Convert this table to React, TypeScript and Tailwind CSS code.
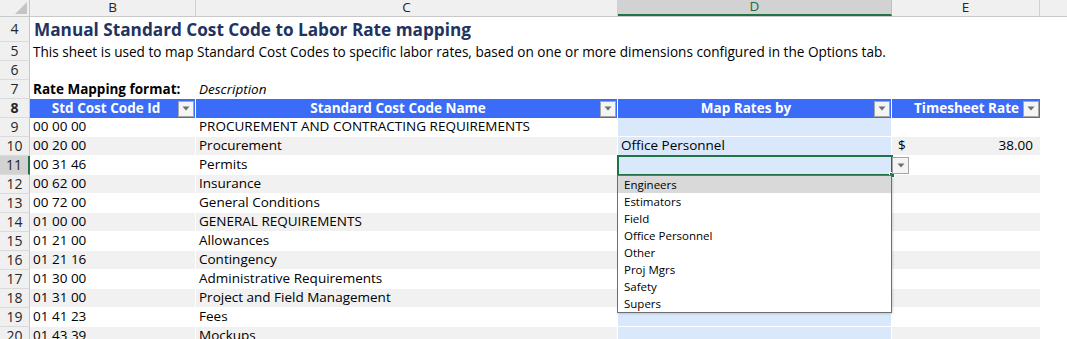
import React from "react";

type Row = {
    n: number;
    id?: string;
    name?: string;
    map?: string;
    rate?: string;
};

const rows: Row[] = [
    { n: 9, id: "00 00 00", name: "PROCUREMENT AND CONTRACTING REQUIREMENTS" },
    { n: 10, id: "00 20 00", name: "Procurement", map: "Office Personnel", rate: "38.00" },
    { n: 11, id: "00 31 46", name: "Permits" },
    { n: 12, id: "00 62 00", name: "Insurance" },
    { n: 13, id: "00 72 00", name: "General Conditions" },
    { n: 14, id: "01 00 00", name: "GENERAL REQUIREMENTS" },
    { n: 15, id: "01 21 00", name: "Allowances" },
    { n: 16, id: "01 21 16", name: "Contingency" },
    { n: 17, id: "01 30 00", name: "Administrative Requirements" },
    { n: 18, id: "01 31 00", name: "Project and Field Management" },
    { n: 19, id: "01 41 23", name: "Fees" },
    { n: 20, id: "01 43 39", name: "Mockups" },
];

const options = ["Engineers", "Estimators", "Field", "Office Personnel", "Other", "Proj Mgrs", "Safety", "Supers"];

function Arrow() {
    return (
        <svg width="8" height="5" viewBox="0 0 8 5">
            <path d="M0.5 0.5 L7.5 0.5 L4 4.5 Z" fill="#6e6e6e" />
        </svg>
    );
}

function FilterButton() {
    return (
        <div className="w-[16px] h-[16px] shrink-0 bg-[#f4f4f4] border border-[#a6a6a6] flex items-center justify-center">
            <Arrow />
        </div>
    );
}

function RowHeader({ n, h, selected }: { n: number; h: string; selected?: boolean }) {
    return (
        <div
            className={`w-[30px] shrink-0 ${h} flex items-center justify-center border-b border-[#dadada] text-[14px] leading-none ${
                selected ? "bg-[#d2d2d2] text-[#1f1f1f] border-r-2 border-r-[#217346]" : "bg-[#f0f0f0] text-[#262626] border-r border-r-[#c8c8c8]"
            }`}
        >
            {n}
        </div>
    );
}

export default function App() {
    return (
        <div
            className="w-[1067px] h-[339px] overflow-hidden bg-white text-black relative leading-none"
            style={{ fontFamily: '"Open Sans", "Noto Sans", sans-serif' }}
        >
            {/* Column headers */}
            <div className="flex h-[17px] bg-[#f0f0f0] border-b border-[#c8c8c8] text-[13.5px] text-[#262626]">
                <div className="w-[30px] shrink-0 border-r border-[#c8c8c8] relative">
                    <svg className="absolute right-[2px] bottom-[2px]" width="12" height="12" viewBox="0 0 12 12">
                        <path d="M12 0 L12 12 L0 12 Z" fill="#c4c4c4" />
                    </svg>
                </div>
                <div className="w-[166px] shrink-0 border-r border-[#d0d0d0] flex items-center justify-center">B</div>
                <div className="w-[422px] shrink-0 border-r border-[#d0d0d0] flex items-center justify-center">C</div>
                <div className="w-[274px] shrink-0 bg-[#d2d2d2] border-b-2 border-[#217346] border-r border-r-[#c0c0c0] flex items-center justify-center text-[#1e6b41]">
                    D
                </div>
                <div className="w-[148px] shrink-0 border-r border-[#d0d0d0] flex items-center justify-center">E</div>
                <div className="flex-1" />
            </div>

            {/* Row 4: title */}
            <div className="flex h-[25px]">
                <RowHeader n={4} h="h-[25px]" />
                <div className="flex items-center pl-[4px] pt-[1px] text-[17.2px] font-bold text-[#22335f] whitespace-nowrap">
                    Manual Standard Cost Code to Labor Rate mapping
                </div>
            </div>

            {/* Row 5: description */}
            <div className="flex h-[19px]">
                <RowHeader n={5} h="h-[19px]" />
                <div className="flex items-center pl-[3px] text-[13.6px] whitespace-nowrap">
                    This sheet is used to map Standard Cost Codes to specific labor rates, based on one or more dimensions configured in the Options tab.
                </div>
            </div>

            {/* Row 6 */}
            <div className="flex h-[19px]">
                <RowHeader n={6} h="h-[19px]" />
            </div>

            {/* Row 7 */}
            <div className="flex h-[19px] text-[13.5px]">
                <RowHeader n={7} h="h-[19px]" />
                <div className="w-[166px] shrink-0 flex items-center pl-[3px] font-bold whitespace-nowrap">Rate Mapping format:</div>
                <div className="flex items-center pl-[3px] italic">Description</div>
            </div>

            {/* Row 8: table header */}
            <div className="flex h-[19px] text-[13.5px] font-bold text-white">
                <RowHeader n={8} h="h-[19px]" />
                <div className="w-[166px] shrink-0 h-[19px] bg-[#3b6cf7] border-r border-white flex items-center pl-[4px] pr-[1px]">
                    <span className="flex-1 text-center">Std Cost Code Id</span>
                    <FilterButton />
                </div>
                <div className="w-[422px] shrink-0 h-[19px] bg-[#3b6cf7] border-r border-white flex items-center pr-[1px]">
                    <span className="flex-1 text-center">Standard Cost Code Name</span>
                    <FilterButton />
                </div>
                <div className="w-[274px] shrink-0 h-[19px] bg-[#3b6cf7] border-r border-white flex items-center pr-[1px]">
                    <span className="flex-1 text-center">Map Rates by</span>
                    <FilterButton />
                </div>
                <div className="w-[148px] shrink-0 h-[19px] bg-[#3b6cf7] flex items-center justify-end gap-[4px] pr-[1px]">
                    <span>Timesheet Rate</span>
                    <FilterButton />
                </div>
            </div>

            {/* Data rows */}
            {rows.map((r) => {
                const band = r.n % 2 === 0 ? "bg-[#f1f1f1]" : "bg-white";
                const sel = r.n === 11;
                return (
                    <div key={r.n} className="flex h-[19px] text-[13.5px]">
                        <RowHeader n={r.n} h="h-[19px]" selected={sel} />
                        <div className={`w-[166px] shrink-0 h-[19px] ${band} border-r border-b border-white flex items-center pl-[3px] whitespace-nowrap`}>
                            {r.id}
                        </div>
                        <div className={`w-[422px] shrink-0 h-[19px] ${band} border-r border-b border-white flex items-center pl-[3px] whitespace-nowrap`}>
                            {r.name}
                        </div>
                        {sel ? (
                            <div className="w-[274px] shrink-0 h-[19px] bg-[#dae8fc] relative">
                                <div className="absolute -left-[1px] -top-[1px] -right-[1px] -bottom-[1px] border-2 border-[#217346]" />
                                <div className="absolute -right-[3px] -bottom-[3px] w-[6px] h-[6px] bg-[#217346] border border-white" />
                                <div className="absolute left-[274px] top-[1px] w-[17px] h-[17px] bg-[#f4f4f4] border border-[#a6a6a6] flex items-center justify-center">
                                    <Arrow />
                                </div>
                            </div>
                        ) : (
                            <div className="w-[274px] shrink-0 h-[19px] bg-[#dae8fc] border-r border-b border-white flex items-center pl-[3px] whitespace-nowrap">
                                {r.map}
                            </div>
                        )}
                        <div className={`w-[148px] shrink-0 h-[19px] ${band} border-b border-white flex items-center pl-[6px] pr-[7px] whitespace-nowrap`}>
                            {r.rate && (
                                <>
                                    <span>$</span>
                                    <span className="flex-1 text-right">{r.rate}</span>
                                </>
                            )}
                        </div>
                    </div>
                );
            })}

            {/* Data validation dropdown */}
            <div className="absolute left-[617px] top-[175px] w-[275px] bg-white border border-[#6f6f6f] shadow-[1px_1px_2px_rgba(0,0,0,0.15)] text-[11.5px] text-black">
                {options.map((o, i) => (
                    <div key={o} className={`h-[17px] flex items-center pl-[6px] ${i === 0 ? "bg-[#d9d9d9]" : ""}`}>
                        {o}
                    </div>
                ))}
            </div>
        </div>
    );
}
